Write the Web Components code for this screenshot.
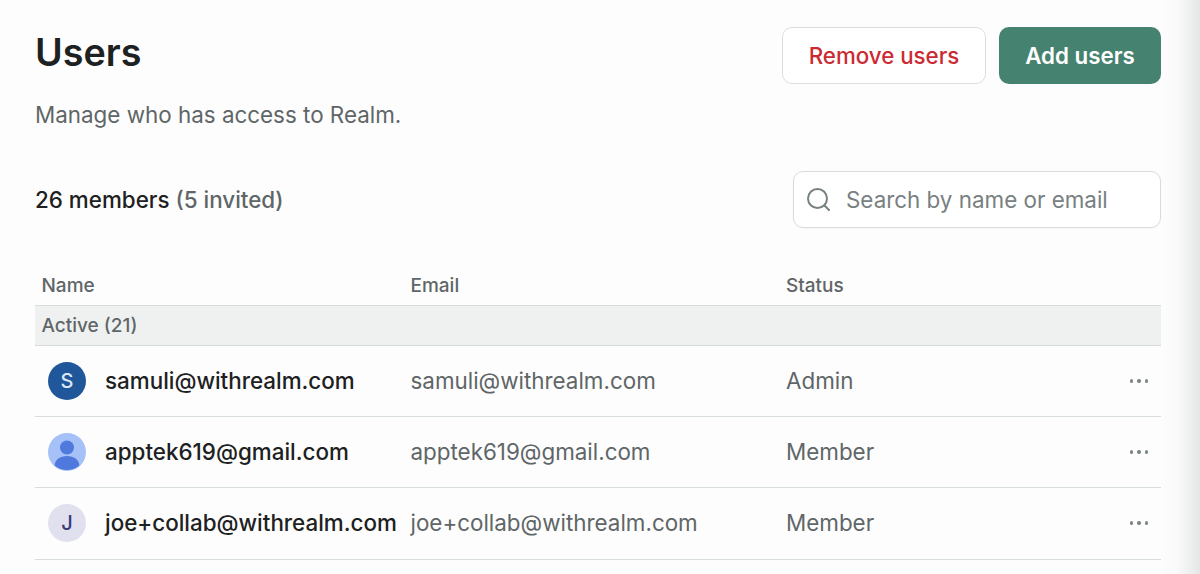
<!DOCTYPE html>
<html lang="en"><head><meta charset="utf-8"><title>Users</title>
<style>
html,body{margin:0;padding:0;height:574px;overflow:hidden;background:#fdfdfd}
body{font-family:Inter,"Liberation Sans",sans-serif}
</style></head><body>
<users-page>
<page-header>
  <ui-button slot="actions" variant="danger">Remove users</ui-button>
  <ui-button slot="actions" variant="primary">Add users</ui-button>
</page-header>
<members-bar></members-bar>
<users-table>
  <user-row avatar="S" kind="blue" name="samuli@withrealm.com" status="Admin"></user-row>
  <user-row avatar="" kind="photo" name="apptek619@gmail.com" status="Member"></user-row>
  <user-row avatar="J" kind="lilac" name="joe+collab@withrealm.com" status="Member"></user-row>
</users-table>
</users-page>
<script>
function def(name, html){
  customElements.define(name, class extends HTMLElement{
    connectedCallback(){
      if(this.shadowRoot) return;
      const r=this.attachShadow({mode:'open'});
      r.innerHTML=typeof html==='function'?html(this):html;
    }
  });
}
def('users-page',`<style>
:host{display:flex;flex-direction:column;box-sizing:border-box;width:1200px;height:574px;padding:27px 39px 0 35px;position:relative;overflow:hidden;color:#1d2122}
.edge{position:absolute;top:0;right:0;bottom:0;width:40px;pointer-events:none;background:linear-gradient(to right,rgba(220,222,222,0),rgba(222,224,224,.12) 45%,rgba(222,224,224,.8))}
</style><slot></slot><div class="edge"></div>`);
def('page-header',`<style>
:host{display:flex;justify-content:space-between;align-items:flex-start;height:144px}
h1{margin:0;font:600 37.7px/50px Inter,sans-serif;color:#1d2122}
p{margin:23px 0 0;font:400 22.4px/30px Inter,sans-serif;color:#5f6667}
.a{display:flex;gap:13px}
</style><div><h1>Users</h1><p>Manage who has access to Realm.</p></div><div class="a"><slot name="actions"></slot></div>`);
def('ui-button',h=>{const p=h.getAttribute('variant')==='primary';return `<style>
:host{display:flex;align-items:center;justify-content:center;box-sizing:border-box;height:57px;padding-top:2px;border-radius:10px;font:${p?600:500} 22.3px/1 Inter,sans-serif;
${p?'width:162px;background:#468270;color:#fff;':'width:204px;background:#fff;color:#cc2a32;border:1px solid #d9dfdf;'}}
</style><slot></slot>`});
def('members-bar',`<style>
:host{display:flex;justify-content:space-between;align-items:center;height:57px;margin-bottom:43px}
.c{font:500 22.4px/30px Inter,sans-serif;color:#1d2122}
.c span{color:#5f6667}
.s{display:flex;align-items:center;box-sizing:border-box;width:368px;height:57px;padding-left:13px;gap:16px;border:1px solid #d7dddd;border-radius:10px;background:#fff;font:400 22.4px/30px Inter,sans-serif;color:#788081;box-shadow:0 1px 2px rgba(0,0,0,.03)}
svg{display:block;flex:none}
</style><div class="c">26 members <span>(5 invited)</span></div>
<div class="s"><svg width="23" height="23" viewBox="0 0 23 23" fill="none" stroke="#788081" stroke-width="2" stroke-linecap="round"><circle cx="10.5" cy="10.5" r="9.5"/><path d="M17.5 17.5l4.5 4.5"/></svg><span>Search by name or email</span></div>`);
const cols='grid-template-columns:375.5px 375.5px 1fr';
def('users-table',`<style>
:host{display:block}
.h{display:grid;grid-template-columns:369px 375.5px 1fr;height:35px;box-sizing:border-box;padding-left:6.5px;font:500 19px/30px Inter,sans-serif;color:#5f6667;border-bottom:1px solid #d7dddd}
.g{height:39px;background:#eff1f1;border-bottom:1px solid #d7dddd;padding-left:6.5px;font:500 19px/39px Inter,sans-serif;color:#5f6667}
</style><div class="h"><span>Name</span><span>Email</span><span>Status</span></div><div class="g">Active (21)</div><slot></slot>`);
def('user-row',h=>{
 const a=h.getAttribute('avatar'),k=h.getAttribute('kind'),n=h.getAttribute('name'),s=h.getAttribute('status');
 const bg={blue:'#20579b',photo:'#a5c1f7',lilac:'#e0e0ef'}[k];const fg={blue:'#dbe9f8',lilac:'#3a3a78',photo:'#fff'}[k];
 const inner=k==='photo'?`<svg width="38" height="38" viewBox="0 0 38 38"><circle cx="19" cy="14.5" r="7" fill="#4f79dd"/><path d="M6.7 32.5c0-5.8 5.5-9.5 12.3-9.5s12.3 3.7 12.3 9.5a19 19 0 0 1-24.6 0z" fill="#4f79dd"/></svg>`:a;
 return `<style>
:host{display:grid;${cols};align-items:center;height:71px;box-sizing:border-box;border-bottom:1px solid #d7dddd;font:400 22.4px/30px Inter,sans-serif;color:#5f6667}
:host(:last-child){height:72px;padding-bottom:1px}
.n{display:flex;align-items:center;gap:19px;padding-left:13px;font-weight:500;color:#1d2122;white-space:nowrap}
.av{width:38px;height:38px;border-radius:50%;flex:none;display:flex;align-items:center;justify-content:center;overflow:hidden;background:${bg};color:${fg};font:500 20px/1 Inter,sans-serif}
.st{display:flex;justify-content:space-between;align-items:center;padding-right:13px}
.m{display:flex;gap:4px}.m i{width:3.5px;height:3.5px;border-radius:50%;background:#7d8586;display:block}
</style><div class="n"><div class="av">${inner}</div><span>${n}</span></div><div>${n}</div><div class="st"><span>${s}</span><div class="m"><i></i><i></i><i></i></div></div>`});
</script>
</body></html>
